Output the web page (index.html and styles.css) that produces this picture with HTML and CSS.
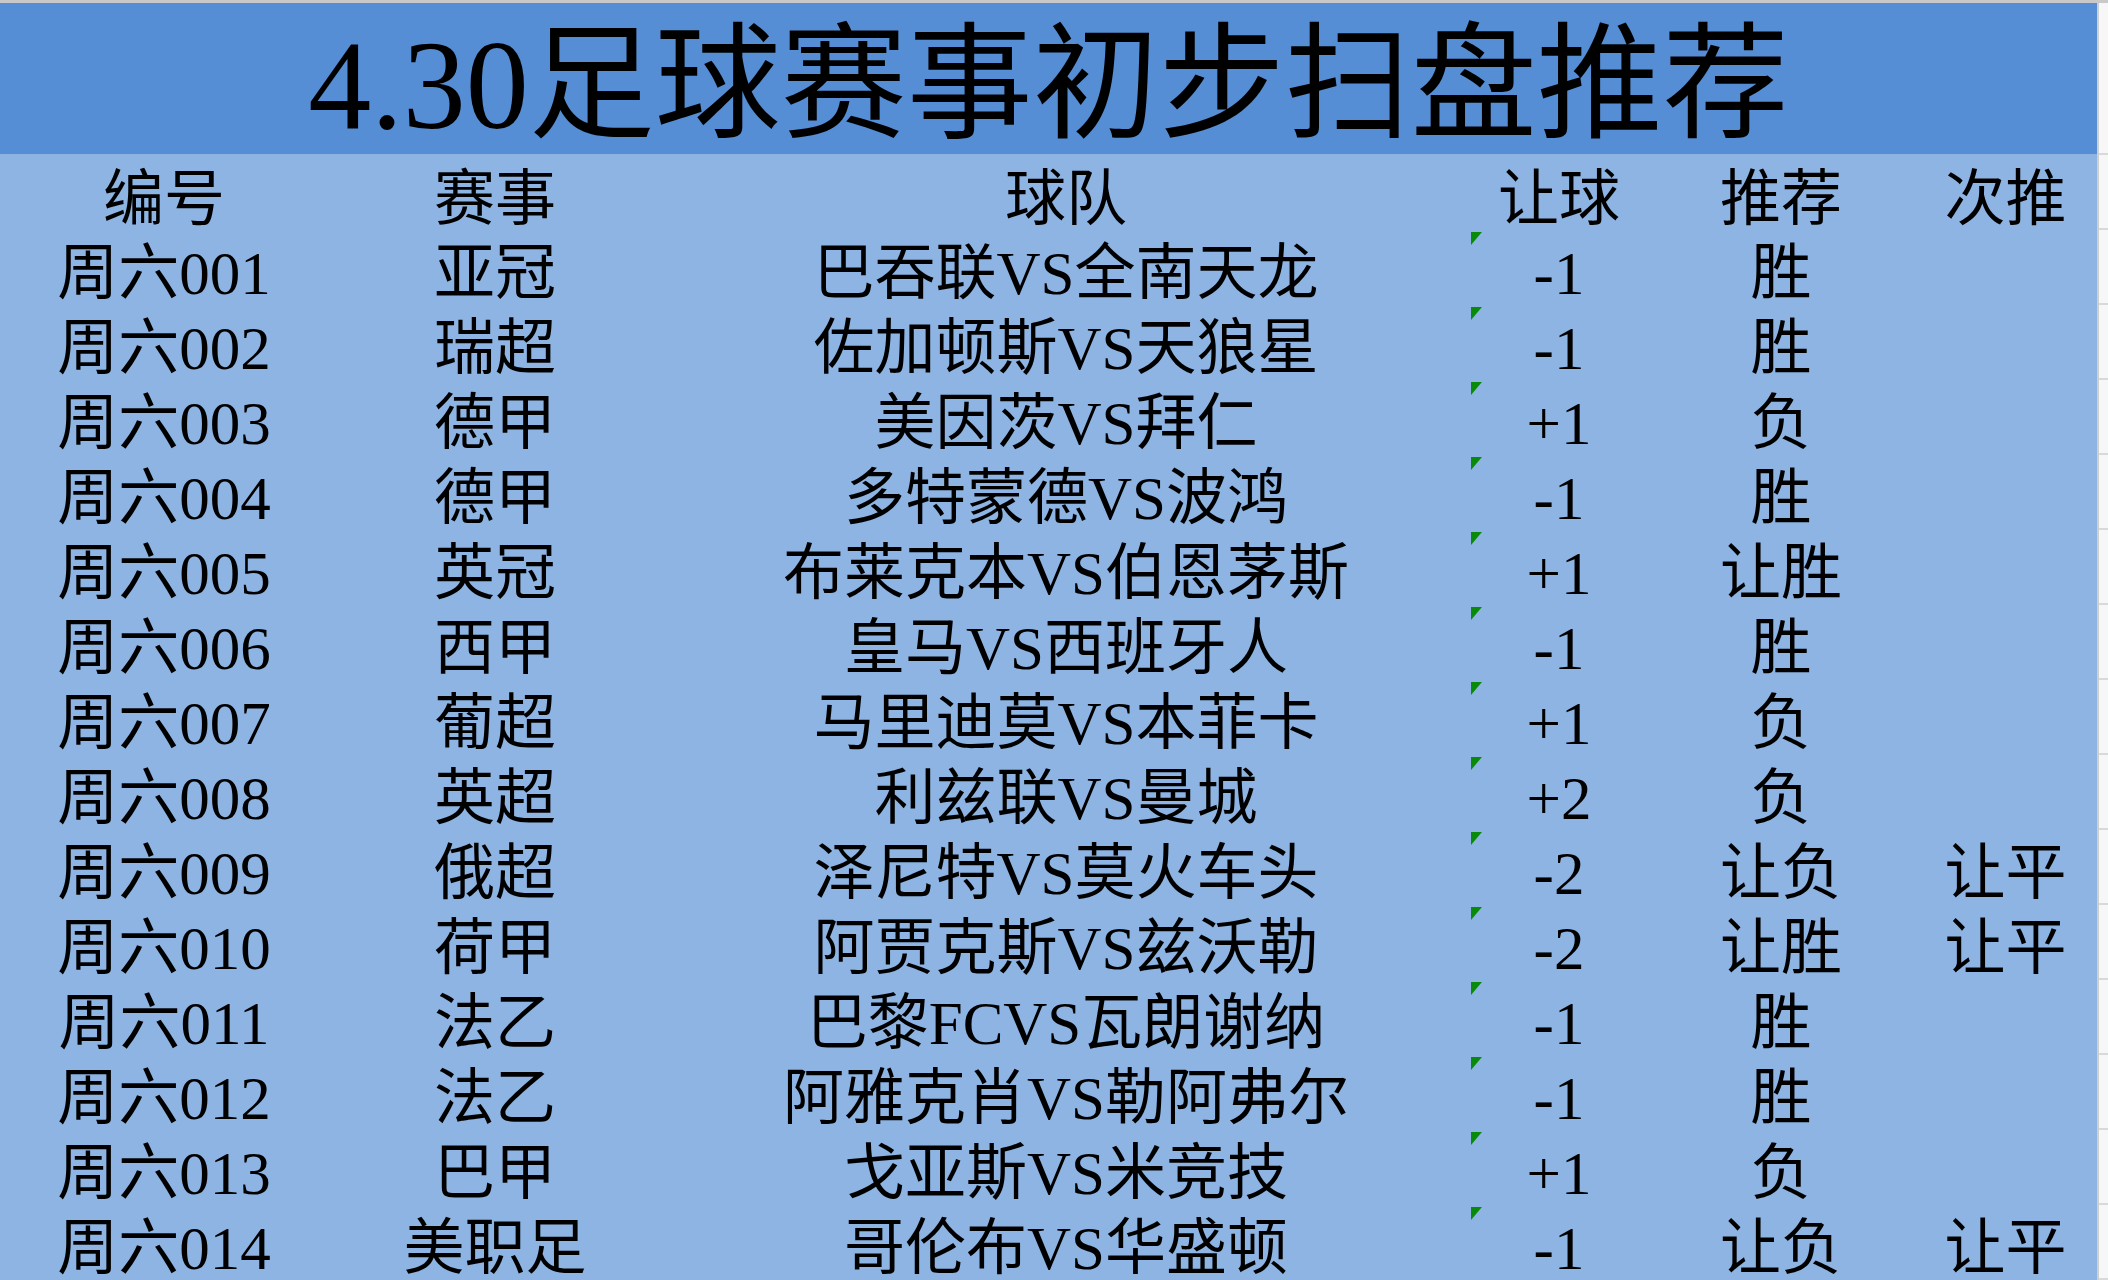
FILE: index.html
```html
<!DOCTYPE html>
<html lang="zh-CN">
<head>
<meta charset="utf-8">
<title>4.30足球赛事初步扫盘推荐</title>
<link rel="stylesheet" href="styles.css">
</head>
<body>
<div class="topline"></div>
<div class="page">
  <div class="sheet">
    <div class="title">4.30足球赛事初步扫盘推荐</div>
    <div class="grid">
      <div class="cell head">编号</div><div class="cell head">赛事</div><div class="cell head">球队</div><div class="cell head">让球</div><div class="cell head">推荐</div><div class="cell head">次推</div>

      <div class="cell">周六001</div><div class="cell">亚冠</div><div class="cell">巴吞联VS全南天龙</div><div class="cell hc"><i class="flag"></i>-1</div><div class="cell">胜</div><div class="cell"></div>
      <div class="cell">周六002</div><div class="cell">瑞超</div><div class="cell">佐加顿斯VS天狼星</div><div class="cell hc"><i class="flag"></i>-1</div><div class="cell">胜</div><div class="cell"></div>
      <div class="cell">周六003</div><div class="cell">德甲</div><div class="cell">美因茨VS拜仁</div><div class="cell hc"><i class="flag"></i>+1</div><div class="cell">负</div><div class="cell"></div>
      <div class="cell">周六004</div><div class="cell">德甲</div><div class="cell">多特蒙德VS波鸿</div><div class="cell hc"><i class="flag"></i>-1</div><div class="cell">胜</div><div class="cell"></div>
      <div class="cell">周六005</div><div class="cell">英冠</div><div class="cell">布莱克本VS伯恩茅斯</div><div class="cell hc"><i class="flag"></i>+1</div><div class="cell">让胜</div><div class="cell"></div>
      <div class="cell">周六006</div><div class="cell">西甲</div><div class="cell">皇马VS西班牙人</div><div class="cell hc"><i class="flag"></i>-1</div><div class="cell">胜</div><div class="cell"></div>
      <div class="cell">周六007</div><div class="cell">葡超</div><div class="cell">马里迪莫VS本菲卡</div><div class="cell hc"><i class="flag"></i>+1</div><div class="cell">负</div><div class="cell"></div>
      <div class="cell">周六008</div><div class="cell">英超</div><div class="cell">利兹联VS曼城</div><div class="cell hc"><i class="flag"></i>+2</div><div class="cell">负</div><div class="cell"></div>
      <div class="cell">周六009</div><div class="cell">俄超</div><div class="cell">泽尼特VS莫火车头</div><div class="cell hc"><i class="flag"></i>-2</div><div class="cell">让负</div><div class="cell">让平</div>
      <div class="cell">周六010</div><div class="cell">荷甲</div><div class="cell">阿贾克斯VS兹沃勒</div><div class="cell hc"><i class="flag"></i>-2</div><div class="cell">让胜</div><div class="cell">让平</div>
      <div class="cell">周六011</div><div class="cell">法乙</div><div class="cell">巴黎FCVS瓦朗谢纳</div><div class="cell hc"><i class="flag"></i>-1</div><div class="cell">胜</div><div class="cell"></div>
      <div class="cell">周六012</div><div class="cell">法乙</div><div class="cell">阿雅克肖VS勒阿弗尔</div><div class="cell hc"><i class="flag"></i>-1</div><div class="cell">胜</div><div class="cell"></div>
      <div class="cell">周六013</div><div class="cell">巴甲</div><div class="cell">戈亚斯VS米竞技</div><div class="cell hc"><i class="flag"></i>+1</div><div class="cell">负</div><div class="cell"></div>
      <div class="cell">周六014</div><div class="cell">美职足</div><div class="cell">哥伦布VS华盛顿</div><div class="cell hc"><i class="flag"></i>-1</div><div class="cell">让负</div><div class="cell">让平</div>
    </div>
  </div>
  <div class="filler">
    <div class="fcell ftitle"></div>
    <div class="fcell"></div><div class="fcell"></div><div class="fcell"></div><div class="fcell"></div><div class="fcell"></div>
    <div class="fcell"></div><div class="fcell"></div><div class="fcell"></div><div class="fcell"></div><div class="fcell"></div>
    <div class="fcell"></div><div class="fcell"></div><div class="fcell"></div><div class="fcell"></div><div class="fcell"></div>
  </div>
</div>
</body>
</html>
```
FILE: styles.css
```css
html, body {
  margin: 0;
  padding: 0;
  background: #f7f7f7;
  overflow: hidden;
  width: 2108px;
  height: 1280px;
}

body {
  font-family: "Liberation Serif", "Noto Sans CJK SC", serif;
  color: #000;
}

.topline {
  height: 3px;
  background: #c9c9c9;
}

.page {
  display: flex;
  align-items: flex-start;
}

.sheet {
  width: 2097px;
  flex: none;
}

.title {
  height: 151px;
  background: #558ed5;
  font-size: 126px;
  line-height: 1;
  display: flex;
  align-items: center;
  justify-content: center;
  padding-top: 14px;
  box-sizing: border-box;
  white-space: nowrap;
}

.grid {
  display: grid;
  grid-template-columns: 328px 334px 808px 178px 266px 183px;
  grid-template-rows: 76px repeat(14, 75px);
  background: #8db4e2;
}

.cell {
  display: flex;
  align-items: center;
  justify-content: center;
  font-size: 61px;
  line-height: 1;
  white-space: nowrap;
  padding-top: 12px;
  box-sizing: border-box;
}

.cell.head {
  padding-top: 14px;
}

.hc {
  position: relative;
}

.flag {
  position: absolute;
  left: 1px;
  top: 2px;
  width: 0;
  height: 0;
  border-top: 13px solid #0a8a0a;
  border-right: 11px solid transparent;
}

.filler {
  flex: 1;
  border-left: 2px solid #cfcfcf;
  display: flex;
  flex-direction: column;
}

.fcell {
  height: 75px;
  border-bottom: 2px solid #d9d9d9;
  box-sizing: border-box;
  background: #f7f7f7;
}

.fcell.ftitle {
  height: 152px;
}
```
